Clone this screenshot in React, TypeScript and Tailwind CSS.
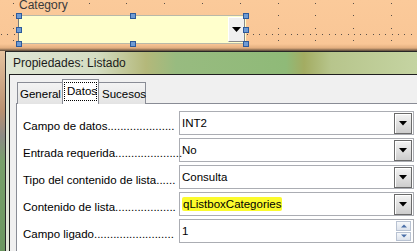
import React from 'react';

const COLS = Array.from({ length: 11 }, (_, i) => 13 + i * 37.8);
const ROWS = [2.7, 15.2, 27.7, 40.2];
const LINE_DOTS = Array.from({ length: 70 }, (_, i) => 1 + i * 6.3);

const HANDLES: [number, number][] = [
  [18, 15], [18, 29], [18, 43],
  [132, 15], [132, 43],
  [245, 15], [245, 29], [245, 43],
];

const ROWS_DATA = [
  { label: 'Campo de datos', dots: 21, value: 'INT2', kind: 'drop' },
  { label: 'Entrada requerida', dots: 21, value: 'No', kind: 'drop' },
  { label: 'Tipo del contenido de lista', dots: 6, value: 'Consulta', kind: 'drop' },
  { label: 'Contenido de lista', dots: 19, value: 'qListboxCategories', kind: 'drop', mark: true },
  { label: 'Campo ligado', dots: 25, value: '1', kind: 'spin' },
];

function DropButton() {
  return (
    <div className="w-[18px] h-[21px] mr-[1px] border border-[#6a6a6a] bg-gradient-to-b from-[#f4f4f4] to-[#cdcdcd] shadow-[inset_1px_1px_0_#ffffff] flex items-center justify-center">
      <svg width="8" height="5" viewBox="0 0 8 5">
        <path d="M0 0H8L4 4.5Z" fill="#000" />
      </svg>
    </div>
  );
}

function SpinButton() {
  return (
    <div className="w-[15px] h-[20px] mr-[2px] flex flex-col gap-[1px]">
      <div className="flex-1 border border-[#b8c2d2] bg-gradient-to-b from-[#f6f8fb] to-[#dde3ec] flex items-center justify-center">
        <svg width="6" height="4" viewBox="0 0 6 4">
          <path d="M0 3.5H6L3 0.5Z" fill="#4a6fa8" />
        </svg>
      </div>
      <div className="flex-1 border border-[#b8c2d2] bg-gradient-to-b from-[#f6f8fb] to-[#dde3ec] flex items-center justify-center">
        <svg width="6" height="4" viewBox="0 0 6 4">
          <path d="M0 0.5H6L3 3.5Z" fill="#4a6fa8" />
        </svg>
      </div>
    </div>
  );
}

export default function App() {
  return (
    <div className="w-[417px] h-[251px] overflow-hidden flex flex-col bg-[#fac897] font-['Liberation_Sans',Arial,sans-serif] text-[11.5px] text-black">
      {/* form designer canvas */}
      <div className="relative h-[51px] shrink-0 bg-[linear-gradient(to_bottom,#fbca9a_0,#f9c696_44px,#e2ae7f_48px,#5a4a3a_51px)]">
        <svg className="absolute inset-0" width="417" height="51">
          {COLS.map((x) =>
            ROWS.map((y) => <rect key={`${x}-${y}`} x={Math.round(x)} y={Math.round(y)} width="1" height="1" fill="#5a5048" />)
          )}
          {LINE_DOTS.map((x) => (
            <rect key={x} x={Math.round(x)} y="34" width="1" height="1" fill="#5a5048" />
          ))}
        </svg>
        <div className="absolute left-[19px] top-[-2px] text-[12px] leading-[14px] text-[#3a3a3a]">Category</div>
        <div className="absolute left-[18px] top-[15px] w-[228px] h-[29px] border-l border-[#7a7a7a] bg-[#ffffcc] border-y border-y-[#b9b9a8] flex items-stretch justify-end">
          <div className="w-[17px] my-[1px] mr-[1px] bg-[#f0f0f0] border-t border-l border-white border-r border-b border-r-[#8a8a8a] border-b-[#8a8a8a] flex items-center justify-center">
            <svg width="9" height="5" viewBox="0 0 9 5">
              <path d="M0 0H9L4.5 5Z" fill="#000" />
            </svg>
          </div>
        </div>
        {HANDLES.map(([x, y]) => (
          <div
            key={`${x}-${y}`}
            className="absolute w-[6px] h-[6px] bg-[#6f9bd4] border border-[#2d5a9a] -translate-x-1/2 -translate-y-1/2"
            style={{ left: x + 0.5, top: y + 0.5 }}
          />
        ))}
      </div>

      {/* dialog */}
      <div className="flex-1 flex min-h-0">
        <div className="w-[5px] bg-[linear-gradient(to_bottom,#e6c4a0_0,#b89070_60px,#8c8a86_85px,#78a06a_110px,#6b9660_200px)]" />
        <div className="flex-1 flex flex-col border-l border-t border-[#262626] min-w-0">
          <div className="h-[22px] shrink-0 flex items-center pl-[7px] text-[12px] text-[#1b1b1b] bg-[linear-gradient(to_right,#dfe6d4_0,#d4ddc3_90px,#b4b87a_140px,#98bb80_170px,#8fba78_280px,#a3ac62_298px,#b7c58c_325px,#c5d4a2_411px)]">
            Propiedades: Listado
          </div>
          <div className="flex-1 flex min-h-0">
            <div className="w-[3px] bg-[#dfe6d6]" />
            <div className="flex-1 flex flex-col bg-[#f0f0f0] border-l border-t border-[#1e1e1e] pt-[4px] pl-[6px] min-w-0">
              <div className="flex items-end h-[25px] pl-[1px] -mb-px relative z-10">
                <div className="w-[46px] h-[22px] border border-b-0 border-[#898c95] bg-gradient-to-b from-[#f3f3f3] to-[#e4e4e4] pl-[2px] pt-[3px] leading-[16px]">
                  General
                </div>
                <div className="w-[37px] h-[25px] -ml-px border border-b-0 border-[#898c95] bg-white px-[1px] pt-[2px] relative z-10">
                  <div className="h-[19px] border border-dotted border-black pl-[2px] leading-[17px]">Datos</div>
                </div>
                <div className="w-[48px] h-[22px] -ml-px border border-b-0 border-[#898c95] bg-gradient-to-b from-[#f3f3f3] to-[#e4e4e4] pl-[3px] pt-[3px] leading-[16px]">
                  Sucesos
                </div>
              </div>
              <div className="flex-1 bg-white border-l border-t border-[#898c95] pt-[7px] flex flex-col gap-[3px]">
                {ROWS_DATA.map((r) => (
                  <div key={r.label} className="flex items-center h-[24px]">
                    <div className="w-[152px] shrink-0 ml-[6px] whitespace-nowrap relative top-[3px] leading-[15px]">
                      {r.label}
                      {'.'.repeat(r.dots)}
                    </div>
                    <div className="ml-[4px] w-[235px] h-[24px] border border-[#abadb3] flex items-center justify-between">
                      <span className="pl-[2px] leading-[15px]">
                        {r.mark ? <span className="bg-[#fbfb2c] px-[1px] py-[1px] rounded-[2px]">{r.value}</span> : r.value}
                      </span>
                      {r.kind === 'drop' ? <DropButton /> : <SpinButton />}
                    </div>
                  </div>
                ))}
              </div>
            </div>
          </div>
        </div>
      </div>
    </div>
  );
}
